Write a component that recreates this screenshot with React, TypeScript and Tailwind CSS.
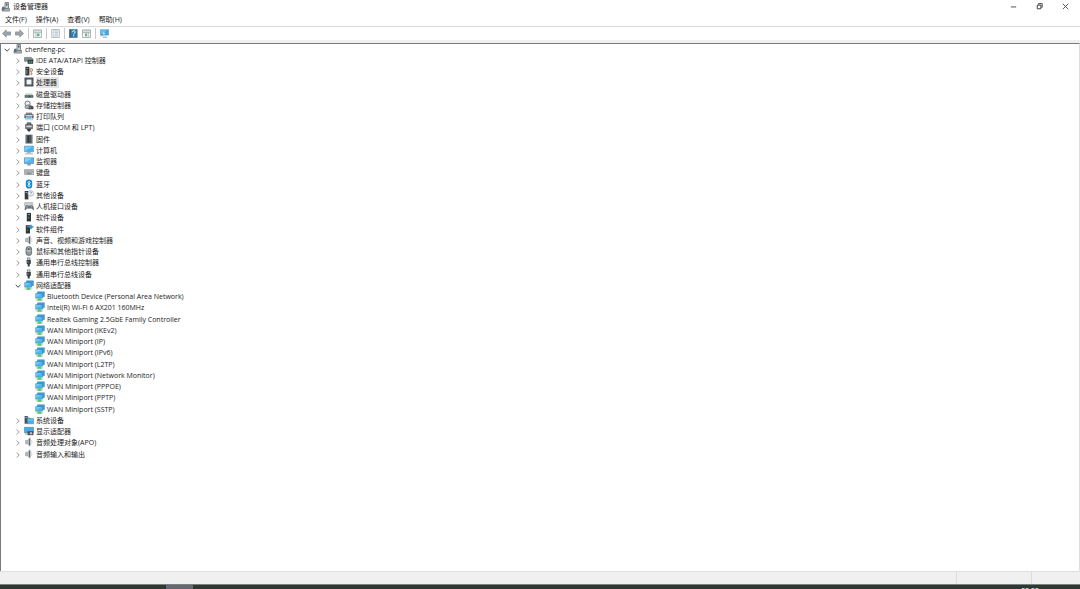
import { useState, type ReactNode } from "react";

type IconName =
  | "pc" | "ide" | "security" | "cpu" | "disk" | "storage" | "printer" | "port"
  | "firmware" | "computer" | "monitor" | "keyboard" | "bluetooth" | "other"
  | "hid" | "software" | "component" | "sound" | "mouse" | "usb" | "network"
  | "system" | "display";

const drawings: Record<IconName, ReactNode> = {
  pc: (
    <>
      <path d="M4 .5h3.5v6H4z" fill="#c8cfd3" stroke="#59636a" strokeWidth=".7" />
      <path d="M5.2 1.5h1.2v2H5.2z" fill="#333b42" />
      <path d="M1 6.5h7.5v2.6H1z" fill="#a9b1b6" stroke="#626b71" strokeWidth=".6" />
      <path d="M1.2 4.7h2.4v3.2H1.2z" fill="#5d676e" />
    </>
  ),
  ide: (
    <>
      <path d="M.5 2.4h6.5l2 1.5v2.4H.5z" fill="#899197" stroke="#626a70" strokeWidth=".6" />
      <path d="M3.6 4.8h5.6v4H3.6z" fill="#353d42" />
      <path d="M4.8 6.2h1.6v1.4H4.8z" fill="#3fbf64" />
      <path d="M7.2 6.2h1v1.4h-1z" fill="#aab2b6" />
    </>
  ),
  security: (
    <>
      <path d="M1.4 .8h4v8.6h-4z" fill="#30363a" />
      <path d="M2.3 2h2v1h-2zM2.3 4h1v4h-1z" fill="#879197" />
      <circle cx="7.2" cy="4" r="1.5" fill="#e5d6c4" stroke="#b08a5e" strokeWidth=".9" />
      <path d="M7.2 5.4v4M7.2 7.8h1.3" stroke="#9d8061" strokeWidth=".9" />
    </>
  ),
  cpu: (
    <>
      <path d="M.5.5h9v9h-9z" fill="#56616a" />
      <path d="M2.4 2.4h5.2v5.2H2.4z" fill="#f2f4f5" />
      <path d="M.5 2h9M.5 8h9M2 .5v9M8 .5v9" stroke="#35414a" strokeWidth=".45" />
    </>
  ),
  disk: (
    <>
      <path d="m1.8 4.5 6.4-.1 1 2H.8z" fill="#c5cbce" />
      <path d="M.7 6.2h8.6v2.5H.7z" fill="#465057" />
      <path d="M1.4 7.2h3" stroke="#aab2b7" strokeWidth=".6" />
      <path d="M7.3 6.8h1v.9h-1z" fill="#69c889" />
    </>
  ),
  storage: (
    <>
      <circle cx="3.6" cy="3.6" r="2.6" fill="#eef0f1" stroke="#626c72" strokeWidth=".9" />
      <path d="m.8 6.7 3-2 4 1.2-2 2.6h-4z" fill="#b2b9bd" stroke="#4c555b" strokeWidth=".6" />
      <path d="M4.6 6.2h4.8v3.1H4.6z" fill="#3c454a" />
      <path d="M5.6 7.4h1.2v.8H5.6z" fill="#d7dcdf" />
    </>
  ),
  printer: (
    <>
      <path d="M1.8 1.6h6.4V4H1.8z" fill="#7d868c" />
      <path d="M.4 3.3h9.2v4H.4z" fill="#59636a" />
      <path d="M1.4 4h7.2v1H1.4z" fill="#d5dadd" />
      <path d="M2.3 5.6h5.4l.8 3.2h-7z" fill="#f6fbff" stroke="#74808a" strokeWidth=".4" />
      <path d="M2.6 6.2h4.8v1.5H2.6z" fill="#48aae1" />
    </>
  ),
  port: (
    <>
      <path d="M3 .7h4v2.2H3zM1.5 2.6h7v4.1h-7z" fill="#777f84" stroke="#444c51" strokeWidth=".6" />
      <path d="M2.5 3.6h5v1.5h-5z" fill="#d8dcde" />
      <path d="M3 6.7h4v1.7H6v1.2H4V8.4H3z" fill="#3a4146" />
    </>
  ),
  firmware: (
    <>
      <path d="M1.5 .7h7v8.8h-7z" fill="#4d5459" />
      <path d="M1.5 2h1.2M1.5 4h1.2M1.5 6h1.2M1.5 8h1.2M7.3 2h1.2M7.3 4h1.2M7.3 6h1.2M7.3 8h1.2" stroke="#c3cace" strokeWidth=".8" />
      <path d="M4.3 2v6" stroke="#252c30" />
    </>
  ),
  computer: (
    <>
      <path d="M.5 1h9v5.8h-9z" fill="#44b3f0" stroke="#5b8fae" strokeWidth=".5" />
      <path d="M1 1.5h7.8L1 6z" fill="#7bcdf9" />
      <path d="M3.2 7.6h3.6M1 8.9h8" stroke="#7d9aaa" strokeWidth=".8" />
    </>
  ),
  monitor: (
    <>
      <path d="M.5 1.8h9v5.8h-9z" fill="#50b7ef" stroke="#467999" strokeWidth=".6" />
      <path d="M1 2.3h7L1 6.5z" fill="#83d1fb" />
      <path d="M5 7.6v1.2M3 8.9h4" stroke="#526c7a" strokeWidth=".8" />
    </>
  ),
  keyboard: (
    <>
      <path d="M.4 2.6h9.2v5H.4z" fill="#c7cccf" stroke="#7b8388" strokeWidth=".6" />
      <path d="M1.2 4h7.6M1.2 5.3h7.6" stroke="#697278" strokeWidth=".7" strokeDasharray="1 .4" />
      <path d="M2.5 6.6h5" stroke="#59636a" strokeWidth=".7" />
    </>
  ),
  bluetooth: (
    <>
      <rect x="1.8" y=".4" width="6.4" height="9.2" rx="3.1" fill="#1389d8" />
      <path d="m3.3 3.2 3.2 3L4.9 8V2l1.6 1.7-3.2 3" fill="none" stroke="#fff" strokeWidth=".7" />
    </>
  ),
  other: (
    <>
      <path d="M.7 1h3.7v8.4H.7z" fill="#333b41" />
      <path d="M1.5 2h1.8v.8H1.5z" fill="#b6bdc1" />
      <circle cx="6.7" cy="3.4" r="2.8" fill="#f5f7f8" stroke="#8f999f" strokeWidth=".6" />
      <path d="M5.8 2.5c.5-1.1 2.2-.5 1.7.5l-.8.8v.5m0 .5v.5" fill="none" stroke="#4d6b83" strokeWidth=".6" />
    </>
  ),
  hid: (
    <>
      <path d="M.6 1.6h8.2V5H.6z" fill="#d9dde0" stroke="#8b9499" strokeWidth=".5" />
      <path d="M1.2 2.8h7" stroke="#909ba2" strokeWidth=".6" strokeDasharray=".8 .4" />
      <path d="M1 9c0-3.5.8-4.6 2-4.6l1 .6h2.4l1-.6c1.4 0 2.2 1.6 2.2 4.6L7.7 7.2H3z" fill="#70797f" stroke="#485158" strokeWidth=".5" />
      <path d="M2.5 6h1.2M6.9 5.8h1" stroke="#edf0f1" strokeWidth=".6" />
    </>
  ),
  software: (
    <>
      <path d="M2.8 .9h4.2v8.5H2.8z" fill="#30373b" />
      <path d="M3.9 2h2v.8h-2z" fill="#a9b3b9" />
      <path d="M4.2 5h1v1.2h-1z" fill="#48ba69" />
    </>
  ),
  component: (
    <>
      <path d="M1.8 1.2h4.2v8.3H1.8z" fill="#30373b" />
      <path d="M2.8 2.4h2v.8h-2z" fill="#a9b3b9" />
      <path d="M3.2 5.4h1v1.2h-1z" fill="#48ba69" />
      <path d="M6.1.8h1.7v1.3h1.6v1.7H7.8v1.4H6.1V3.8H4.8V2.1h1.3z" fill="#3896d2" />
    </>
  ),
  sound: (
    <>
      <path d="M1.6 3.4h1.8L6.2.8v8.4L3.4 6.8H1.6z" fill="#b4babd" stroke="#7e878c" strokeWidth=".5" />
      <path d="M5.5 1.8v6.4" stroke="#60696f" />
      <path d="M7.2 2.8c1 1.5 1 3 0 4.5" fill="none" stroke="#b6bec2" strokeWidth=".6" />
    </>
  ),
  mouse: (
    <>
      <rect x="2" y=".6" width="5.6" height="8.8" rx="2.6" fill="#959ca0" stroke="#474f53" strokeWidth=".7" />
      <path d="M4.8 1v4M2.4 4.9h4.9" stroke="#e4e7e9" strokeWidth=".6" />
      <path d="M4.2 2.2h1.2v1.7H4.2z" fill="#333c41" />
    </>
  ),
  usb: (
    <>
      <path d="M3.4.8H6v2.4H3.4z" fill="#d9dddf" stroke="#5b6469" strokeWidth=".6" />
      <path d="M2.6 3.1h4.2v3.4L5.7 7.6v2h-2v-2L2.6 6.5z" fill="#353d42" />
      <path d="M3.6 4h.8v2h-.8z" fill="#929da3" />
    </>
  ),
  network: (
    <>
      <path d="M2.5 .8h6.9v4.9H2.5z" fill="#3da2e0" stroke="#367ca6" strokeWidth=".5" />
      <path d="M.7 2.6h6.9v4.6H.7z" fill="#4fb4f0" stroke="#367ca6" strokeWidth=".5" />
      <path d="M1.2 3.1h5.2L1.2 6z" fill="#70c8f9" />
      <path d="M.5 8.9h7.8" stroke="#b5c4c7" strokeWidth=".9" />
      <path d="M3.2 7.3h2.5l1.2 2.4H2.2z" fill="#4fca5c" />
    </>
  ),
  system: (
    <>
      <path d="M.6 1h3.2v7.7H.6z" fill="#465158" />
      <path d="M1.4 2h1.4v1H1.4z" fill="#a8c0cc" />
      <path d="M3.4 2.8h2.2l.7.8h3.2v5.2H3.4z" fill="#4badde" stroke="#4081a6" strokeWidth=".5" />
      <path d="M4 5h5" stroke="#8ad6fa" strokeWidth=".8" />
    </>
  ),
  display: (
    <>
      <path d="M.5 1.3h9v5.6h-9z" fill="#44ace6" stroke="#4c7f9e" strokeWidth=".6" />
      <path d="M3.5 5.2h5.9v4H3.5z" fill="#49545a" />
      <circle cx="7" cy="7.2" r="1.2" fill="#b6bfc4" />
      <path d="M1 8.2h2.4" stroke="#87949b" strokeWidth=".7" />
    </>
  ),
};

function Icon({ name }: { name: IconName }) {
  return (
    <svg viewBox="0 0 10 10" className="size-[10px] shrink-0" aria-hidden="true">
      {drawings[name]}
    </svg>
  );
}

const beforeNetwork: [string, IconName][] = [
  ["IDE ATA/ATAPI 控制器", "ide"],
  ["安全设备", "security"],
  ["处理器", "cpu"],
  ["磁盘驱动器", "disk"],
  ["存储控制器", "storage"],
  ["打印队列", "printer"],
  ["端口 (COM 和 LPT)", "port"],
  ["固件", "firmware"],
  ["计算机", "computer"],
  ["监视器", "monitor"],
  ["键盘", "keyboard"],
  ["蓝牙", "bluetooth"],
  ["其他设备", "other"],
  ["人机接口设备", "hid"],
  ["软件设备", "software"],
  ["软件组件", "component"],
  ["声音、视频和游戏控制器", "sound"],
  ["鼠标和其他指针设备", "mouse"],
  ["通用串行总线控制器", "usb"],
  ["通用串行总线设备", "usb"],
];

const adapters = [
  "Bluetooth Device (Personal Area Network)",
  "Intel(R) Wi-Fi 6 AX201 160MHz",
  "Realtek Gaming 2.5GbE Family Controller",
  "WAN Miniport (IKEv2)",
  "WAN Miniport (IP)",
  "WAN Miniport (IPv6)",
  "WAN Miniport (L2TP)",
  "WAN Miniport (Network Monitor)",
  "WAN Miniport (PPPOE)",
  "WAN Miniport (PPTP)",
  "WAN Miniport (SSTP)",
];

const afterNetwork: [string, IconName][] = [
  ["系统设备", "system"],
  ["显示适配器", "display"],
  ["音频处理对象(APO)", "sound"],
  ["音频输入和输出", "sound"],
];

const indents = ["pl-[2px]", "pl-[13px]", "pl-[24px]"];

interface RowProps {
  level: number;
  icon: IconName;
  label: string;
  open?: boolean;
  selected?: boolean;
  onToggle?: () => void;
  onSelect: () => void;
}

function Row({ level, icon, label, open = false, selected = false, onToggle, onSelect }: RowProps) {
  return (
    <li
      role="treeitem"
      aria-level={level + 1}
      aria-expanded={level < 2 ? open : undefined}
      aria-selected={selected}
      className={`flex h-[11px] items-start gap-[2px] [&:nth-child(4n)]:h-[12px] ${indents[level]}`}
    >
      {level < 2 ? (
        <button
          type="button"
          aria-label={`展开或折叠 ${label}`}
          onClick={onToggle}
          className="flex h-[11px] w-[8px] shrink-0 items-center justify-center"
        >
          <svg viewBox="0 0 8 8" className="size-[8px]" fill="none" aria-hidden="true">
            {open ? (
              <path d="m1.7 2.8 2.4 2.4 2.4-2.4" stroke="#454545" />
            ) : (
              <path d="m2.7 1.5 2.5 2.5-2.5 2.5" stroke="#999" />
            )}
          </svg>
        </button>
      ) : (
        <span className="w-[8px] shrink-0" />
      )}
      <Icon name={icon} />
      <button
        type="button"
        onClick={onSelect}
        className={`h-[11px] pr-[2px] leading-[11px] whitespace-nowrap ${selected ? "bg-[#e5e5e5]" : ""}`}
      >
        {label}
      </button>
    </li>
  );
}

function DeviceTree() {
  const [rootOpen, setRootOpen] = useState(true);
  const [networkOpen, setNetworkOpen] = useState(true);
  const [selected, setSelected] = useState("处理器");

  const category = ([label, icon]: [string, IconName]) => (
    <Row key={label} level={1} icon={icon} label={label} selected={selected === label} onSelect={() => setSelected(label)} />
  );

  return (
    <ul role="tree" aria-label="设备" className="flex flex-col">
      <Row
        level={0}
        icon="pc"
        label="chenfeng-pc"
        open={rootOpen}
        selected={selected === "chenfeng-pc"}
        onToggle={() => setRootOpen(!rootOpen)}
        onSelect={() => setSelected("chenfeng-pc")}
      />
      {rootOpen && (
        <>
          {beforeNetwork.map(category)}
          <Row
            level={1}
            icon="network"
            label="网络适配器"
            open={networkOpen}
            selected={selected === "网络适配器"}
            onToggle={() => setNetworkOpen(!networkOpen)}
            onSelect={() => setSelected("网络适配器")}
          />
          {networkOpen &&
            adapters.map((label) => (
              <Row key={label} level={2} icon="network" label={label} selected={selected === label} onSelect={() => setSelected(label)} />
            ))}
          {afterNetwork.map(category)}
        </>
      )}
    </ul>
  );
}

function Tool({ label, children }: { label: string; children: ReactNode }) {
  return (
    <button type="button" aria-label={label} className="size-[9px] shrink-0">
      <svg viewBox="0 0 10 10" className="size-[9px]" aria-hidden="true">
        {children}
      </svg>
    </button>
  );
}

function Separator() {
  return <span className="h-[11px] w-px shrink-0 bg-[#c9c9c9]" />;
}

function Toolbar() {
  return (
    <div role="toolbar" aria-label="工具栏" className="flex h-[13px] items-center gap-[4px] border-t border-[#d9d9d9] pl-[2px]">
      <Tool label="后退">
        <path d="M.5 5 4.7 1v2.2h4.8v3.6H4.7V9z" fill="#9ba5ac" stroke="#79838a" strokeWidth=".7" />
      </Tool>
      <Tool label="前进">
        <path d="M9.5 5 5.3 1v2.2H.5v3.6h4.8V9z" fill="#9ba5ac" stroke="#79838a" strokeWidth=".7" />
      </Tool>
      <Separator />
      <Tool label="显示/隐藏控制台树">
        <path d="M.5 1h9v8.4h-9z" fill="#f5f6f6" stroke="#909b9f" strokeWidth=".8" />
        <path d="M.8 2.1h8.4M1 4h8M3.3 4v5" stroke="#a7b1b5" strokeWidth=".9" />
        <path d="M4.7 5h2.4v3H4.7z" fill="#4dae70" />
      </Tool>
      <Separator />
      <Tool label="属性">
        <path d="M.8 .5h8.4v9H.8z" fill="#f4f5f6" stroke="#98a5ad" strokeWidth=".8" />
        <path d="M2.3 2.2h5.4M2.3 4h1M4 4h3.7M2.3 5.7h1M4 5.7h3.7M2.3 7.7h5.4" stroke="#8eabbc" strokeWidth=".7" />
      </Tool>
      <Separator />
      <Tool label="帮助">
        <path d="M.6 .4h8.6v9.2H.6z" fill="#2c7eac" stroke="#4d748c" strokeWidth=".6" />
        <path d="M.6 .4h1.4v9.2H.6z" fill="#4b5b66" />
        <path d="M3.6 3.6c0-2.3 3.5-2 3.3 0C6.8 4.8 5.2 4.6 5.2 6.1M5.2 7v1.2" fill="none" stroke="#fff" strokeWidth="1.1" />
      </Tool>
      <Tool label="操作窗格">
        <path d="M.5 1h9v8.4h-9z" fill="#f8f8f8" stroke="#8d989f" strokeWidth=".8" />
        <path d="M.8 2.1h8.4M1 4h8M6.9 4v5" stroke="#9ca7ad" strokeWidth=".9" />
        <path d="M3.4 5h2v3h-2z" fill="#54ad76" />
      </Tool>
      <Separator />
      <Tool label="扫描检测硬件改动">
        <path d="M.3 .8h9.4v6H.3z" fill="#3ea9e5" stroke="#5f93b1" strokeWidth=".6" />
        <path d="M.9 1.3h7.2L.9 5.5z" fill="#6cc6f3" />
        <circle cx="4.2" cy="5" r="1.6" fill="#b9e4f8" stroke="#4e95bc" strokeWidth=".5" />
        <path d="M3 6.3 1.2 8.4M3 9.2h5" stroke="#5b879e" strokeWidth=".8" />
      </Tool>
    </div>
  );
}

export default function App() {
  return (
    <div className="flex h-screen min-w-[320px] flex-col overflow-hidden bg-white font-['Open_Sans','Noto_Sans_CJK_SC',sans-serif] text-[7px] leading-[11px] text-[#1c1c1c]">
      <header className="flex h-[13px] shrink-0 items-center pl-px">
        <Icon name="pc" />
        <h1 className="flex-1 pl-[2px]">设备管理器</h1>
        <div className="flex gap-[17px] pr-[10px]">
          <Tool label="最小化">
            <path d="M2 5.5h6" stroke="#3e464c" />
          </Tool>
          <Tool label="还原">
            <path d="M2.5 3.5h4v4h-4zM4 3V1.8h4v4H7" fill="none" stroke="#303030" />
          </Tool>
          <Tool label="关闭">
            <path d="m2 2 6 6m0-6L2 8" stroke="#303030" strokeWidth=".9" />
          </Tool>
        </div>
      </header>
      <nav aria-label="菜单" className="flex h-[13px] shrink-0 items-center gap-[9px] pl-[5px]">
        <button type="button">文件(F)</button>
        <button type="button">操作(A)</button>
        <button type="button">查看(V)</button>
        <button type="button">帮助(H)</button>
      </nav>
      <div className="shrink-0 border-b-[3px] border-[#f0f0f0] pb-px">
        <Toolbar />
      </div>
      <main className="min-h-0 flex-1 overflow-hidden border-t border-r border-l border-t-[#777a80] border-r-[#dedede] border-l-[#777a80]">
        <DeviceTree />
      </main>
      <footer className="flex h-[13px] shrink-0 justify-end border-t border-[#dedede] bg-[#f0f0f0]">
        <span className="w-[75px] border-l border-[#dcdcdc]" />
        <span className="w-[49px] border-l border-[#dcdcdc]" />
      </footer>
      <div className="flex h-[5px] shrink-0 justify-between overflow-hidden border-t border-[#77817d] bg-[#303833]">
        <span className="ml-[166px] h-[4px] w-[27px] bg-[#676872]" />
        <time className="mr-[41px] text-white">22:22</time>
      </div>
    </div>
  );
}
